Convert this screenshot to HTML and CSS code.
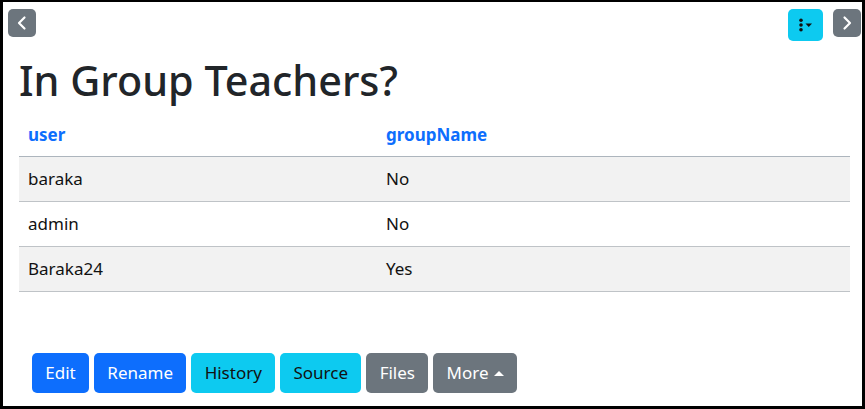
FILE: index.html
```html
<!DOCTYPE html>
<html>
<head>
<meta charset="utf-8">
<link rel="stylesheet" href="styles.css">
</head>
<body>
<div class="frame">
  <div class="topbar">
    <button class="nav-btn" aria-label="Previous">
      <svg width="14" height="16" viewBox="0 0 14 16"><path d="M9.5 2.5 L4 8 L9.5 13.5" fill="none" stroke="#fff" stroke-width="2.2" stroke-linecap="round" stroke-linejoin="round"/></svg>
    </button>
    <div class="top-right">
      <button class="menu-btn" aria-label="Menu">
        <svg width="18" height="14" viewBox="0 0 18 14"><circle cx="4" cy="2.3" r="1.8" fill="#111"/><circle cx="4" cy="7" r="1.8" fill="#111"/><circle cx="4" cy="11.7" r="1.8" fill="#111"/><path d="M8.5 5.5 L15 5.5 L11.75 9 Z" fill="#111"/></svg>
      </button>
      <button class="nav-btn" aria-label="Next">
        <svg width="14" height="16" viewBox="0 0 14 16"><path d="M4.5 2.5 L10 8 L4.5 13.5" fill="none" stroke="#fff" stroke-width="2.2" stroke-linecap="round" stroke-linejoin="round"/></svg>
      </button>
    </div>
  </div>
  <main class="content">
    <h1 class="title">In Group Teachers?</h1>
    <table class="data">
      <thead>
        <tr><th class="c1"><a href="#">user</a></th><th><a href="#">groupName</a></th></tr>
      </thead>
      <tbody>
        <tr class="odd"><td>baraka</td><td>No</td></tr>
        <tr><td>admin</td><td>No</td></tr>
        <tr class="odd"><td>Baraka24</td><td>Yes</td></tr>
      </tbody>
    </table>
  </main>
  <div class="actions">
    <button class="btn primary">Edit</button>
    <button class="btn primary">Rename</button>
    <button class="btn info">History</button>
    <button class="btn info">Source</button>
    <button class="btn secondary">Files</button>
    <button class="btn secondary">More <span class="caret-up"></span></button>
  </div>
</div>
</body>
</html>
```

FILE: styles.css
```css
html, body {
  margin: 0;
  padding: 0;
  background: #fff;
}
body {
  font-family: "Noto Sans", "Open Sans", sans-serif;
  font-size: 17px;
  color: #212529;
}
.frame {
  box-sizing: border-box;
  width: 865px;
  height: 409px;
  border-style: solid;
  border-color: #000;
  border-width: 2px 3px 3px 3px;
  display: flex;
  flex-direction: column;
  position: relative;
}
.topbar {
  display: flex;
  justify-content: space-between;
  align-items: flex-start;
  padding: 7px 1px 0 5px;
}
.top-right {
  display: flex;
  gap: 10px;
}
.nav-btn {
  width: 28px;
  height: 28px;
  border: 0;
  border-radius: 5px;
  background: #6c757d;
  padding: 0;
  display: flex;
  align-items: center;
  justify-content: center;
}
.menu-btn {
  width: 35px;
  height: 32px;
  border: 0;
  border-radius: 5px;
  background: #0dcaf0;
  padding: 0;
  display: flex;
  align-items: center;
  justify-content: center;
}
.content {
  padding: 0 12px 0 16px;
}
.title {
  font-size: 41.3px;
  font-weight: 500;
  line-height: 48px;
  margin: 15px 0 9px 0;
  color: #212529;
}
.data {
  width: 831px;
  border-collapse: collapse;
}
.data th {
  text-align: left;
  font-weight: 700;
  padding: 10px 9px 9px 9px;
  line-height: 24px;
  border-bottom: 1px solid #adb5bd;
}
.data th a {
  color: #0d6efd;
  text-decoration: none;
}
.data .c1 {
  width: 340px;
}
.data td {
  padding: 10px 9px 10px 9px;
  line-height: 24px;
  border-bottom: 1px solid #bfc3c7;
  color: #111;
}
.data tr.odd td {
  background: #f2f2f2;
}
.actions {
  margin-top: auto;
  padding: 0 0 13px 29px;
  display: flex;
  gap: 5px;
}
.btn {
  font-family: inherit;
  font-size: 17px;
  line-height: 24px;
  height: 40px;
  padding: 0 13.3px;
  border: 0;
  border-radius: 5px;
  display: inline-flex;
  align-items: center;
}
.primary { background: #0d6efd; color: #fff; }
.info { background: #0dcaf0; color: #111; }
.secondary { background: #6c757d; color: #fff; }
.caret-up {
  display: inline-block;
  margin-left: 5px;
  width: 0;
  height: 0;
  border-left: 5px solid transparent;
  border-right: 5px solid transparent;
  border-bottom: 5px solid #fff;
}
```
